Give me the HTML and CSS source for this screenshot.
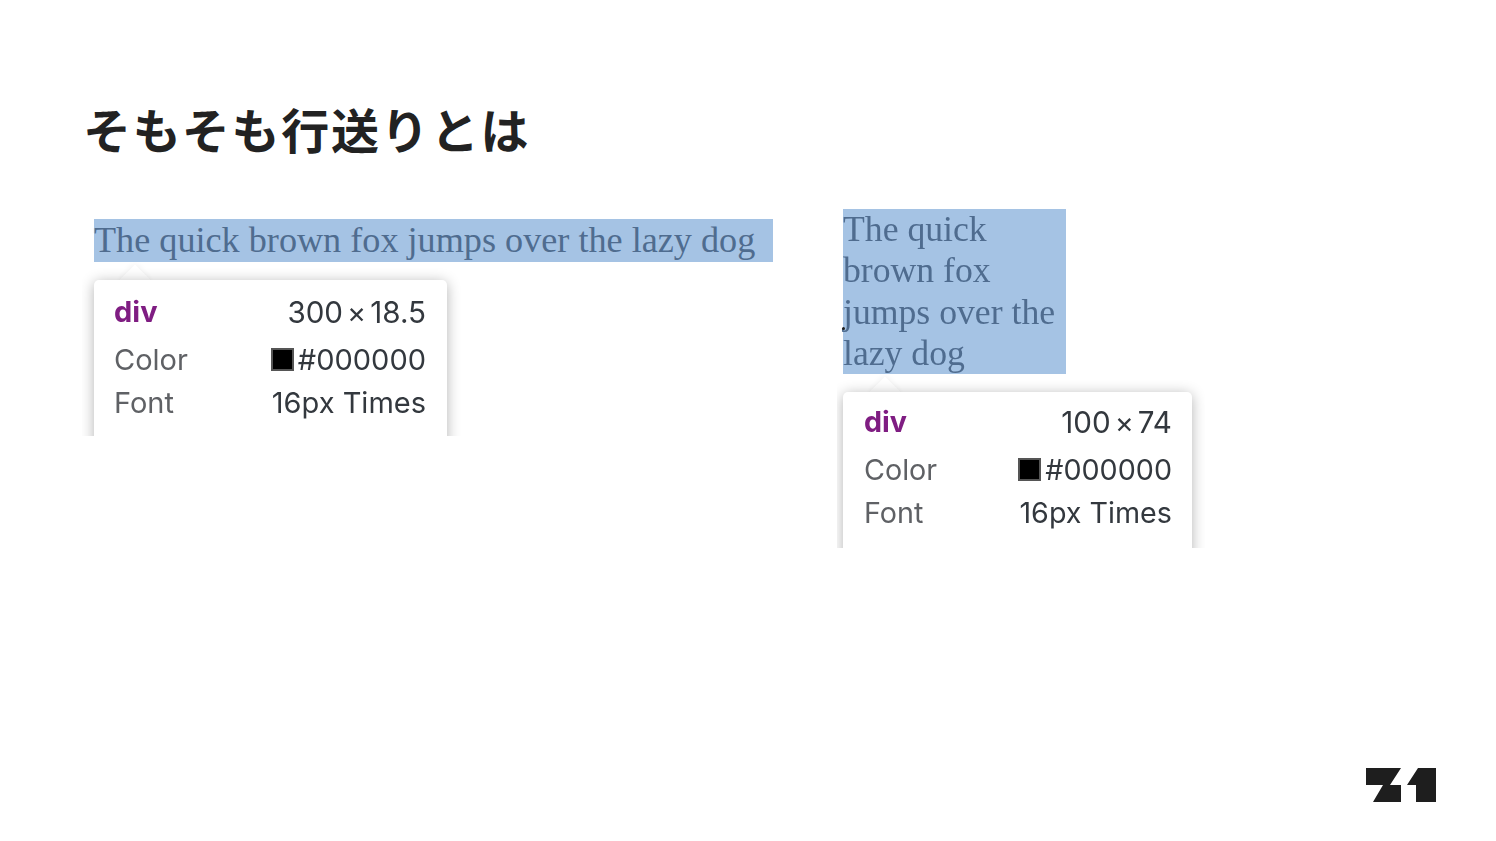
FILE: index.html
```html
<!DOCTYPE html>
<html lang="ja">
<head>
    <meta charset="UTF-8">
    <title>そもそも行送りとは</title>
    <link rel="stylesheet" href="styles.css">
</head>
<body>
    <div class="slide">
        <h1>そもそも行送りとは</h1>

        <div class="shots">
            <div class="shot shot-wide">
                <div class="sample">The quick brown fox jumps over the lazy dog</div>
                <div class="clip">
                    <div class="card">
                        <div class="row row-head"><span class="tag">div</span><span class="size">300<i class="times">×</i>18.5</span></div>
                        <div class="row"><span class="label">Color</span><span class="value"><b class="swatch"></b>#000000</span></div>
                        <div class="row"><span class="label">Font</span><span>16px Times</span></div>
                    </div>
                </div>
            </div>

            <div class="shot shot-narrow">
                <div class="sample">The quick brown fox jumps over the lazy dog</div>
                <span class="dot"></span>
                <div class="clip">
                    <div class="card">
                        <div class="row row-head"><span class="tag">div</span><span class="size">100<i class="times">×</i>74</span></div>
                        <div class="row"><span class="label">Color</span><span class="value"><b class="swatch"></b>#000000</span></div>
                        <div class="row"><span class="label">Font</span><span>16px Times</span></div>
                    </div>
                </div>
            </div>
        </div>

        <div class="footer">
            <svg class="logo" width="70" height="34" viewBox="0 0 70 34">
                <path d="M0 0H35L24 17H35V34H7L17 17H0Z"/>
                <path d="M52 0H70V34H50V17H41Z"/>
            </svg>
        </div>
    </div>
</body>
</html>
```

FILE: styles.css
```css
* {
    box-sizing: border-box;
    margin: 0;
    padding: 0;
}

body {
    background-color: #fff;
    color: #222;
    font-family: 'Inter', 'Noto Sans CJK JP', sans-serif;
}

.slide {
    height: 841px;
    padding: 95px 60px 39px 83px;
    display: flex;
    flex-direction: column;
    overflow: hidden;
}

h1 {
    font-family: 'Noto Sans CJK JP', sans-serif;
    font-size: 48px;
    font-weight: 700;
    line-height: 67px;
    letter-spacing: 1.8px;
    color: #222;
}

.shots {
    display: flex;
    align-items: flex-start;
    margin-top: 47px;
    margin-left: -1px;
}

/* the pasted devtools captures are a little soft */
.shot {
    position: relative;
    padding-left: 12px;
    filter: blur(0.35px);
}

.shot-wide {
    width: 755px;
    margin-top: 10px;
}

.shot-narrow {
    padding-left: 6px;
}

.sample {
    background-color: #a5c3e4;
    color: #4f6c8f;
    font-family: 'Liberation Serif', 'Times New Roman', serif;
}

.shot-wide .sample {
    width: 679px;
    height: 43px;
    font-size: 36.2px;
    line-height: 43px;
}

.shot-narrow .sample {
    width: 223px;
    height: 165px;
    font-size: 35.7px;
    line-height: 41.25px;
}

.dot {
    position: absolute;
    left: 5px;
    top: 118px;
    width: 3px;
    height: 3px;
    border-radius: 50%;
    background-color: #222;
}

.clip {
    position: relative;
    width: 379px;
    height: 174px;
    padding: 18px 14px 0 12px;
    margin-left: -12px;
    overflow: hidden;
}

.shot-narrow .clip {
    width: 368px;
    padding: 18px 13px 0 6px;
    margin-left: -6px;
}

/* little arrow above the card */
.clip::before {
    content: '';
    position: absolute;
    left: 42px;
    top: 7px;
    width: 22px;
    height: 22px;
    background-color: #fff;
    transform: rotate(45deg);
    box-shadow: 0 0 6px rgba(0,0,0,0.08);
}

.shot-narrow .clip::before {
    left: 37px;
}

.card {
    position: relative;
    height: 180px;
    padding: 10px 21px 0 20px;
    background-color: #fff;
    border-radius: 5px;
    box-shadow: 0 2px 14px rgba(0,0,0,0.3);
    font-size: 29px;
    color: #33383e;
}

.shot-narrow .card {
    padding: 8px 20px 0 21px;
    font-size: 28.7px;
}

.row {
    display: flex;
    justify-content: space-between;
    align-items: center;
    height: 43px;
}

.row-head {
    margin-bottom: 5px;
}

.size {
    font-size: 29.6px;
}

.tag {
    color: #7f1d82;
    font-weight: 700;
}

.label {
    color: #5f6165;
}

.times {
    font-style: normal;
    margin: 0 4px;
    font-size: 29px;
}

.value {
    display: flex;
    align-items: center;
    gap: 4px;
}

.swatch {
    width: 23px;
    height: 23px;
    background-color: #000;
    border: 2px solid #555;
}

.footer {
    margin-top: auto;
    display: flex;
    justify-content: flex-end;
}

.logo {
    display: block;
    fill: #1e1e1e;
}
```
